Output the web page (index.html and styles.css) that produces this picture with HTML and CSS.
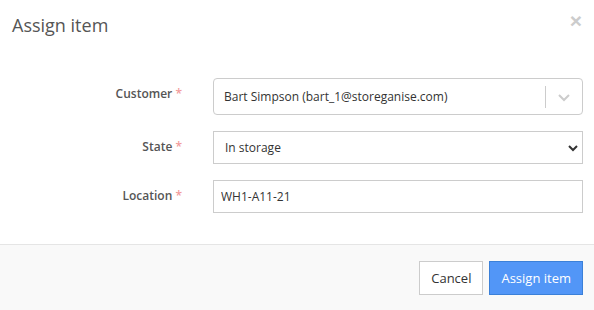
FILE: index.html
```html
<!DOCTYPE html>
<html lang="en">
<head>
    <meta charset="UTF-8">
    <meta name="viewport" content="width=device-width, initial-scale=1.0">
    <title>Assign item</title>
    <link rel="stylesheet" href="styles.css">
</head>
<body>
    <div class="modal">
        <div class="modal-header">
            <h4 class="modal-title">Assign item</h4>
            <button type="button" class="close">&times;</button>
        </div>

        <form class="modal-body">
            <div class="form-row">
                <label class="control-label">Customer <span class="required">*</span></label>
                <div class="select-box">
                    <span class="select-value">Bart Simpson (bart_1@storeganise.com)</span>
                    <span class="select-separator"></span>
                    <span class="select-arrow">
                        <svg width="20" height="20" viewBox="0 0 20 20"><path d="M5 8l5 5 5-5" fill="none" stroke="#ccc" stroke-width="2"/></svg>
                    </span>
                </div>
            </div>

            <div class="form-row">
                <label class="control-label">State <span class="required">*</span></label>
                <div class="native-select">
                    <span>In storage</span>
                    <svg width="12" height="12" viewBox="0 0 12 12"><path d="M2 4l4 4 4-4" fill="none" stroke="#333" stroke-width="2"/></svg>
                </div>
            </div>

            <div class="form-row">
                <label class="control-label">Location <span class="required">*</span></label>
                <input type="text" class="form-control" value="WH1-A11-21">
            </div>
        </form>

        <div class="modal-footer">
            <button type="button" class="btn btn-default">Cancel</button>
            <button type="button" class="btn btn-primary">Assign item</button>
        </div>
    </div>
</body>
</html>
```

FILE: styles.css
```css
html, body {
    margin: 0;
    font-family: "Open Sans", sans-serif;
    font-size: 12px;
    color: #333;
    background: #fff;
}

.modal {
    width: 594px;
    height: 310px;
    display: flex;
    flex-direction: column;
}

.modal-header {
    height: 60px;
    display: flex;
    justify-content: space-between;
    align-items: flex-start;
    padding: 0 12px;
}

.modal-title {
    margin: 13px 0 0;
    font-size: 18px;
    font-weight: 400;
    color: #555;
}

.close {
    margin-top: 9px;
    padding: 0;
    border: none;
    background: none;
    font-family: "Liberation Sans", sans-serif;
    font-size: 21px;
    font-weight: bold;
    color: #ccc;
    cursor: pointer;
}

.modal-body {
    flex: 1;
    margin: 0;
    padding: 18px 11px 0 0;
    display: flex;
    flex-direction: column;
    gap: 16px;
}

.form-row {
    display: grid;
    grid-template-columns: 182px 1fr;
    column-gap: 31px;
    align-items: start;
}

.control-label {
    padding-top: 7px;
    text-align: right;
    font-weight: 600;
    color: #555;
}

.required {
    color: #f29a9a;
}

.select-box {
    height: 37px;
    box-sizing: border-box;
    border: 1px solid #ccc;
    border-radius: 4px;
    display: flex;
    align-items: center;
    padding-left: 10px;
}

.select-value {
    flex: 1;
}

.select-separator {
    width: 1px;
    height: 22px;
    background: #ccc;
}

.select-arrow {
    width: 36px;
    display: flex;
    justify-content: center;
}

.native-select {
    height: 33px;
    box-sizing: border-box;
    border: 1px solid #ccc;
    display: flex;
    align-items: center;
    justify-content: space-between;
    padding: 0 3px 0 11px;
}

.form-control {
    height: 33px;
    box-sizing: border-box;
    border: 1px solid #ccc;
    padding: 0 7px;
    font-family: inherit;
    font-size: 12px;
    color: #333;
    margin: 0;
}

.modal-footer {
    height: 66px;
    box-sizing: border-box;
    border-top: 1px solid #e5e5e5;
    background: #f9f9f9;
    display: flex;
    justify-content: flex-end;
    align-items: flex-start;
    gap: 6px;
    padding: 16px 11px 0 0;
}

.btn {
    height: 34px;
    padding: 0 11px;
    font-family: inherit;
    font-size: 13px;
    border: 1px solid #ccc;
    cursor: pointer;
}

.btn-default {
    background: #fff;
    color: #333;
}

.btn-primary {
    background: #5296f7;
    border-color: #3b80d8;
    color: #fff;
}
```
